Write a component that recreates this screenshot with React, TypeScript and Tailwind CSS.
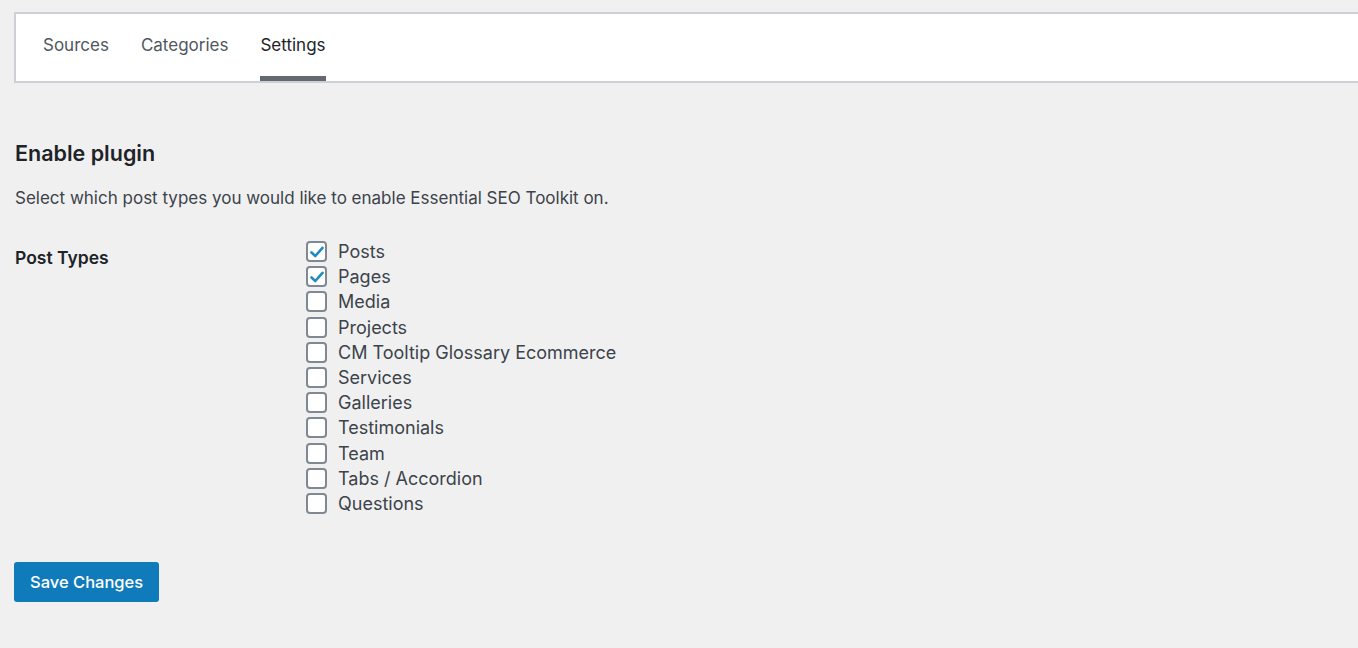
import React from "react";

const items: [string, boolean][] = [
  ["Posts", true],
  ["Pages", true],
  ["Media", false],
  ["Projects", false],
  ["CM Tooltip Glossary Ecommerce", false],
  ["Services", false],
  ["Galleries", false],
  ["Testimonials", false],
  ["Team", false],
  ["Tabs / Accordion", false],
  ["Questions", false],
];

function Box({ checked }: { checked: boolean }) {
  return (
    <span className="flex h-[21px] w-[21px] shrink-0 items-center justify-center rounded-[4px] border-2 border-[#7e8993] bg-white">
      {checked && (
        <svg width="16" height="16" viewBox="0 0 16 16">
          <path d="M2.5 8.5 L6.3 12 L13.5 3.8" fill="none" stroke="#1e8cbe" strokeWidth="2.6" strokeLinecap="round" strokeLinejoin="round" />
        </svg>
      )}
    </span>
  );
}

export default function App() {
  return (
    <div className="min-h-[648px] w-full overflow-hidden bg-[#f0f0f1] pt-[12px] text-[#3c434a]" style={{ fontFamily: "Inter, 'Open Sans', sans-serif" }}>
      <div className="-mr-4 ml-[14px] flex h-[71px] items-stretch gap-[32px] border-2 border-[#cdd1d5] bg-white pl-[27px]">
        <div className="flex items-center pb-[4px] text-[17px] text-[#50575e]">Sources</div>
        <div className="flex items-center pb-[4px] text-[17px] text-[#50575e]">Categories</div>
        <div className="relative flex items-center pb-[4px] text-[17px] text-[#1d2327]">
          Settings
          <span className="absolute bottom-0 left-0 right-0 h-[5px] bg-[#646970]" />
        </div>
      </div>
      <div className="px-[15px]">
        <h2 className="mt-[56px] text-[21.5px] font-semibold leading-[28px] text-[#1d2327]">Enable plugin</h2>
        <p className="mt-[19px] text-[17px] leading-[24px] text-[#3c434a]">
          Select which post types you would like to enable Essential SEO Toolkit on.
        </p>
        <div className="mt-[30px] flex">
          <div className="w-[291px] pt-[6px] text-[17.5px] font-semibold leading-[24px] text-[#1d2327]">Post Types</div>
          <div className="-mt-px flex flex-col">
            {items.map(([label, checked]) => (
              <label key={label} className="flex h-[25.2px] items-center gap-[11px] text-[18px] text-[#3c434a]">
                <Box checked={checked} />
                <span>{label}</span>
              </label>
            ))}
          </div>
        </div>
        <button className="-ml-px mt-[46px] h-[40px] rounded-[3px] bg-[#107bba] px-[16px] text-[16.5px] font-medium text-white">
          Save Changes
        </button>
      </div>
    </div>
  );
}
